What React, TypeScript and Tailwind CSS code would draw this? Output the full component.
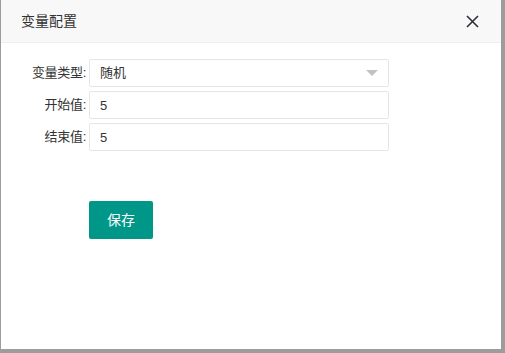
const font = { fontFamily: '"Liberation Sans", "Noto Sans CJK SC", sans-serif' };

function Field({ label, children }: { label: string; children: React.ReactNode }) {
  return (
    <div className="flex items-center">
      <label className="w-[88px] text-right text-[13px] text-[#333] pr-[3px] tracking-[-0.3px]">{label}</label>
      {children}
    </div>
  );
}

export default function App() {
  return (
    <div className="w-[505px] h-[353px] bg-[#9c9c9c] pl-px" style={font}>
      <div className="w-[500px] h-[349px] bg-white flex flex-col">
        <div className="h-[43px] bg-[#f8f8f8] border-b border-[#eee] flex items-center justify-between pl-[20px] pr-[22px]">
          <span className="text-[14px] text-[#333]">变量配置</span>
          <svg width="13" height="13" viewBox="0 0 13 13" className="text-[#2f2f3a]">
            <path d="M1 1L12 12M12 1L1 12" stroke="currentColor" strokeWidth="1.6" />
          </svg>
        </div>
        <div className="flex flex-col gap-[4px] pt-[16px]">
          <Field label="变量类型:">
            <div className="w-[300px] h-[28px] border border-[#e6e6e6] rounded-[2px] flex items-center justify-between pl-[10px] pr-[10px]">
              <span className="text-[13px] text-[#333]">随机</span>
              <span className="w-0 h-0 border-l-[6px] border-r-[6px] border-t-[6px] border-l-transparent border-r-transparent border-t-[#c2c2c2]" />
            </div>
          </Field>
          <Field label="开始值:">
            <input
              defaultValue="5"
              className="w-[300px] h-[28px] border border-[#e6e6e6] rounded-[2px] pl-[10px] text-[13px] text-[#333] outline-none"
            />
          </Field>
          <Field label="结束值:">
            <input
              defaultValue="5"
              className="w-[300px] h-[28px] border border-[#e6e6e6] rounded-[2px] pl-[10px] text-[13px] text-[#333] outline-none"
            />
          </Field>
        </div>
        <div className="pl-[88px] pt-[50px]">
          <button className="h-[38px] px-[18px] bg-[#009688] text-white text-[14px] rounded-[2px]">保存</button>
        </div>
      </div>
    </div>
  );
}
